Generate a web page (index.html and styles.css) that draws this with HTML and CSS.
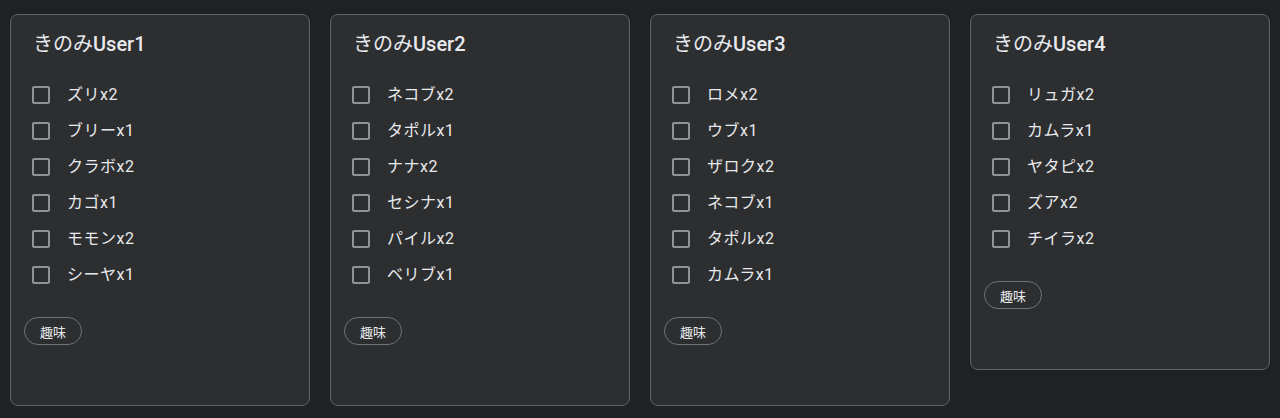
FILE: index.html
```html
<!DOCTYPE html>
<html lang="ja">
<head>
<meta charset="utf-8">
<title>きのみ</title>
<link rel="stylesheet" href="styles.css">
</head>
<body>
<main class="board">
  <section class="card">
    <h2 class="title">きのみ<span class="title-user">User1</span></h2>
    <ul class="list">
      <li class="item"><span class="box"></span><span class="label">ズリx2</span></li>
      <li class="item"><span class="box"></span><span class="label">ブリーx1</span></li>
      <li class="item"><span class="box"></span><span class="label">クラボx2</span></li>
      <li class="item"><span class="box"></span><span class="label">カゴx1</span></li>
      <li class="item"><span class="box"></span><span class="label">モモンx2</span></li>
      <li class="item"><span class="box"></span><span class="label">シーヤx1</span></li>
    </ul>
    <div class="chips"><span class="chip">趣味</span></div>
  </section>
  <section class="card">
    <h2 class="title">きのみ<span class="title-user">User2</span></h2>
    <ul class="list">
      <li class="item"><span class="box"></span><span class="label">ネコブx2</span></li>
      <li class="item"><span class="box"></span><span class="label">タポルx1</span></li>
      <li class="item"><span class="box"></span><span class="label">ナナx2</span></li>
      <li class="item"><span class="box"></span><span class="label">セシナx1</span></li>
      <li class="item"><span class="box"></span><span class="label">パイルx2</span></li>
      <li class="item"><span class="box"></span><span class="label">ベリブx1</span></li>
    </ul>
    <div class="chips"><span class="chip">趣味</span></div>
  </section>
  <section class="card">
    <h2 class="title">きのみ<span class="title-user">User3</span></h2>
    <ul class="list">
      <li class="item"><span class="box"></span><span class="label">ロメx2</span></li>
      <li class="item"><span class="box"></span><span class="label">ウブx1</span></li>
      <li class="item"><span class="box"></span><span class="label">ザロクx2</span></li>
      <li class="item"><span class="box"></span><span class="label">ネコブx1</span></li>
      <li class="item"><span class="box"></span><span class="label">タポルx2</span></li>
      <li class="item"><span class="box"></span><span class="label">カムラx1</span></li>
    </ul>
    <div class="chips"><span class="chip">趣味</span></div>
  </section>
  <section class="card">
    <h2 class="title">きのみ<span class="title-user">User4</span></h2>
    <ul class="list">
      <li class="item"><span class="box"></span><span class="label">リュガx2</span></li>
      <li class="item"><span class="box"></span><span class="label">カムラx1</span></li>
      <li class="item"><span class="box"></span><span class="label">ヤタピx2</span></li>
      <li class="item"><span class="box"></span><span class="label">ズアx2</span></li>
      <li class="item"><span class="box"></span><span class="label">チイラx2</span></li>
    </ul>
    <div class="chips"><span class="chip">趣味</span></div>
  </section>
</main>
</body>
</html>
```

FILE: styles.css
```css
* { box-sizing: border-box; }

html, body {
  margin: 0;
  padding: 0;
  background: #202124;
}

body {
  font-family: "Roboto", "Noto Sans CJK JP", sans-serif;
  color: #e8eaed;
  height: 418px;
  overflow: hidden;
}

.board {
  display: flex;
  align-items: flex-start;
  gap: 20px;
  padding: 14px 10px;
}

.card {
  width: 300px;
  flex: 0 0 300px;
  background: #2d2e30;
  border: 1px solid #5f6368;
  border-radius: 8px;
  padding: 17px 0 60px 0;
}

.title {
  margin: 0;
  padding-left: 22px;
  font-size: 20px;
  line-height: 24px;
  font-weight: 400;
  color: #e8eaed;
}

.title-user {
  font-weight: 500;
}

.list {
  list-style: none;
  margin: 21px 0 0 0;
  padding: 0;
}

.item {
  display: flex;
  align-items: center;
  height: 36px;
  padding-left: 21px;
}

.box {
  width: 18px;
  height: 18px;
  border: 2px solid #8f9397;
  border-radius: 2px;
  flex: 0 0 18px;
}

.label {
  margin-left: 17px;
  font-size: 16px;
  line-height: 20px;
  letter-spacing: 0.5px;
  color: #e8eaed;
}

.chips {
  display: flex;
  margin-top: 24px;
  padding-left: 13px;
}

.chip {
  display: inline-flex;
  align-items: center;
  height: 28px;
  padding: 0 15px;
  border: 1px solid #6f7377;
  border-radius: 14px;
  font-size: 13px;
  color: #e8eaed;
}
```
